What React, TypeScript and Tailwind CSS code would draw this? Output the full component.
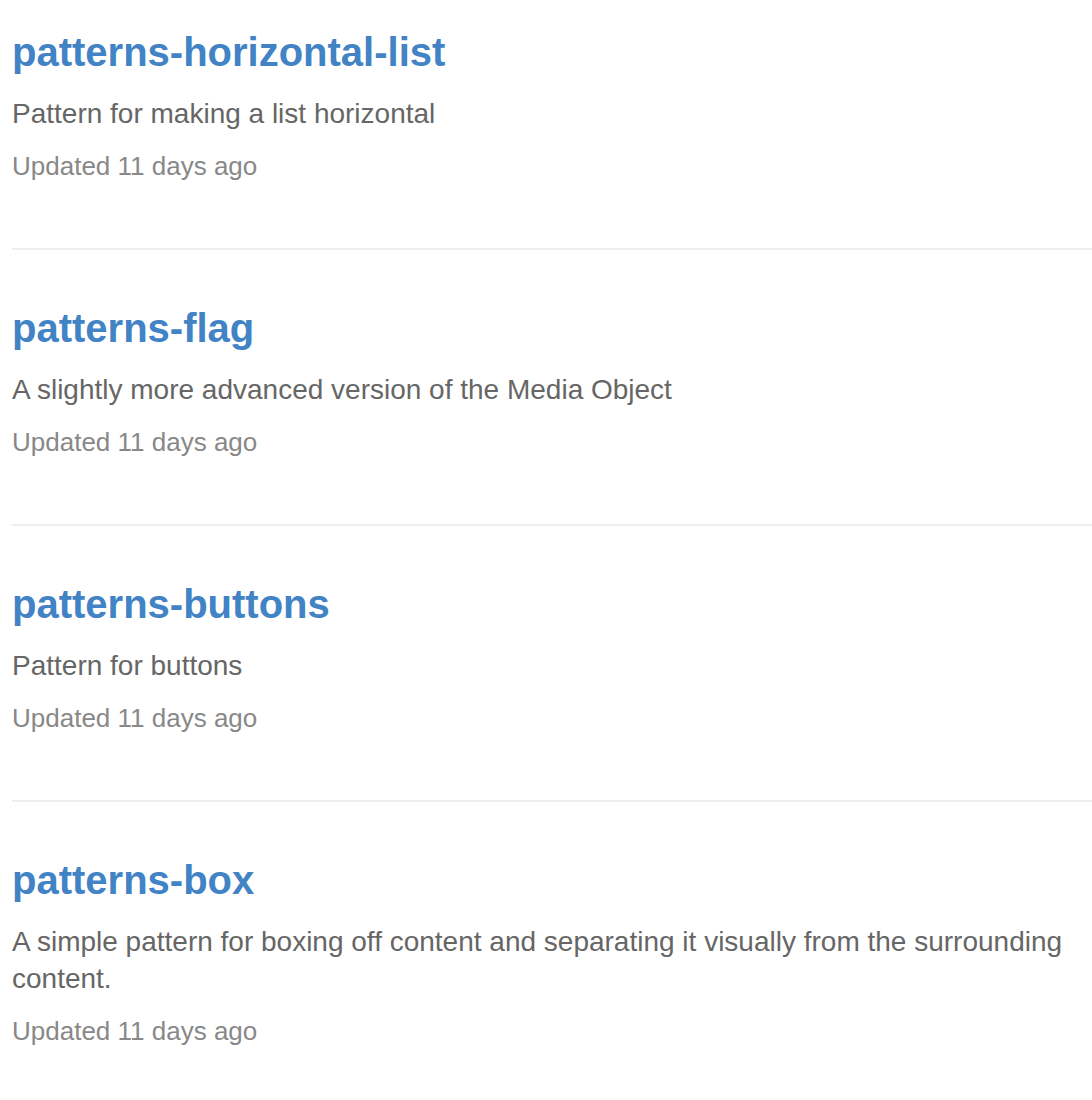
import React from "react";

const items = [
  { name: "patterns-horizontal-list", desc: "Pattern for making a list horizontal" },
  { name: "patterns-flag", desc: "A slightly more advanced version of the Media Object" },
  { name: "patterns-buttons", desc: "Pattern for buttons" },
  {
    name: "patterns-box",
    desc: "A simple pattern for boxing off content and separating it visually from the surrounding content.",
  },
];

export default function App() {
  return (
    <div className="w-[1092px] h-[1100px] bg-white overflow-hidden" style={{ fontFamily: '"Liberation Sans", Arial, sans-serif' }}>
      <ul className="pl-[12px]">
        {items.map((it, i) => (
          <li
            key={it.name}
            className={
              (i === 0 ? "pt-[28px] " : "pt-[54px] ") +
              (i < items.length - 1 ? "pb-[64px] border-b-2 border-[#eeeeee]" : "")
            }
          >
            <h3 className="text-[40px] leading-[48px] font-bold text-[#4183c4]">{it.name}</h3>
            <p className="mt-[19px] text-[28px] leading-[37px] text-[#666666]">{it.desc}</p>
            <p className="mt-[16px] text-[26px] leading-[36px] text-[#888888]">Updated 11 days ago</p>
          </li>
        ))}
      </ul>
    </div>
  );
}
